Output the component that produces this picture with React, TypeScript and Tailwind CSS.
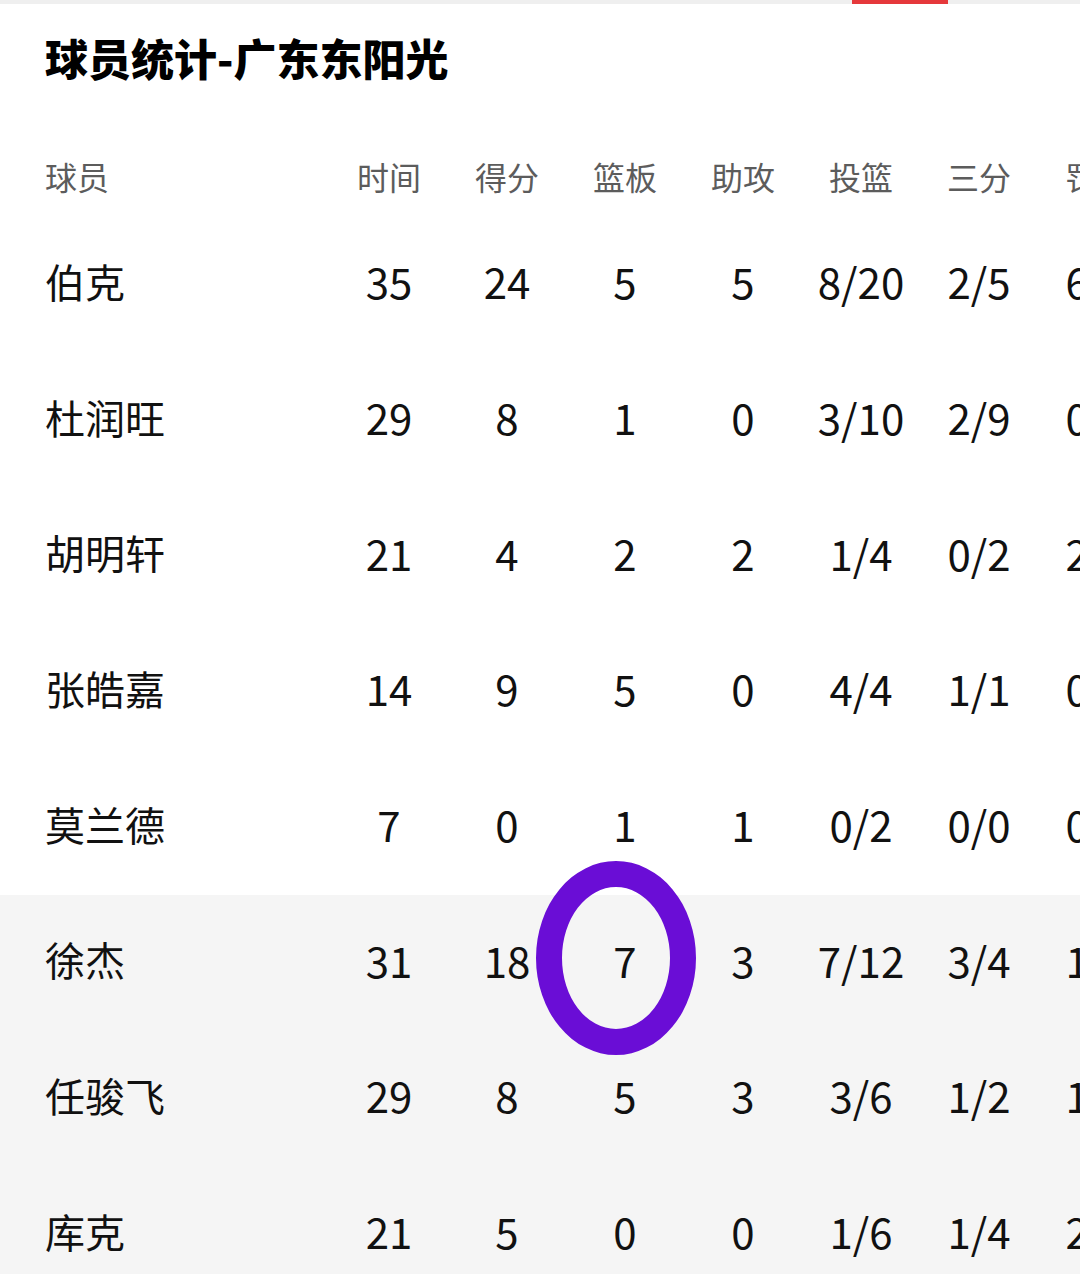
import React from "react";

const headers = ["时间", "得分", "篮板", "助攻", "投篮", "三分", "罚球"];

const rows: { name: string; v: string[]; gray?: boolean }[] = [
  { name: "伯克", v: ["35", "24", "5", "5", "8/20", "2/5", "6/7"] },
  { name: "杜润旺", v: ["29", "8", "1", "0", "3/10", "2/9", "0/0"] },
  { name: "胡明轩", v: ["21", "4", "2", "2", "1/4", "0/2", "2/2"] },
  { name: "张皓嘉", v: ["14", "9", "5", "0", "4/4", "1/1", "0/0"] },
  { name: "莫兰德", v: ["7", "0", "1", "1", "0/2", "0/0", "0/0"] },
  { name: "徐杰", v: ["31", "18", "7", "3", "7/12", "3/4", "1/2"], gray: true },
  { name: "任骏飞", v: ["29", "8", "5", "3", "3/6", "1/2", "1/2"], gray: true },
  { name: "库克", v: ["21", "5", "0", "0", "1/6", "1/4", "2/2"], gray: true },
];

const font = {
  fontFamily: '"Noto Sans CJK SC", "Noto Sans", sans-serif',
};

export default function App() {
  return (
    <div
      className="relative w-[1080px] h-[1274px] overflow-hidden bg-white"
      style={font}
    >
      <div className="relative h-[4px] bg-[#efefef]">
        <div className="absolute left-[852px] top-0 h-[4px] w-[96px] bg-[#e5383b]" />
      </div>
      <div className="h-[136px] pl-[45px] pt-[25px]">
        <div className="text-[43px] leading-[56px] font-black text-black">
          球员统计-广东东阳光
        </div>
      </div>
      <div className="flex h-[77px] items-center pb-[6px] pl-[45px] text-[32px] text-[#5c5c5c] whitespace-nowrap">
        <div className="w-[285px] shrink-0">球员</div>
        {headers.map((h) => (
          <div key={h} className="w-[118px] shrink-0 text-center">
            {h}
          </div>
        ))}
      </div>
      {rows.map((r) => (
        <div
          key={r.name}
          className={`flex h-[135.7px] items-center pb-[8px] pl-[45px] text-[42px] text-[#111] whitespace-nowrap ${
            r.gray ? "bg-[#f5f5f5]" : "bg-white"
          }`}
        >
          <div className="w-[285px] shrink-0 text-[40px]">{r.name}</div>
          {r.v.map((x, i) => (
            <div key={i} className="w-[118px] shrink-0 text-center">
              {x}
            </div>
          ))}
        </div>
      ))}
      <div className="absolute left-[536px] top-[861px] h-[194px] w-[160px] rounded-[50%] border-[26px] border-[#6a0dd6]" />
    </div>
  );
}
